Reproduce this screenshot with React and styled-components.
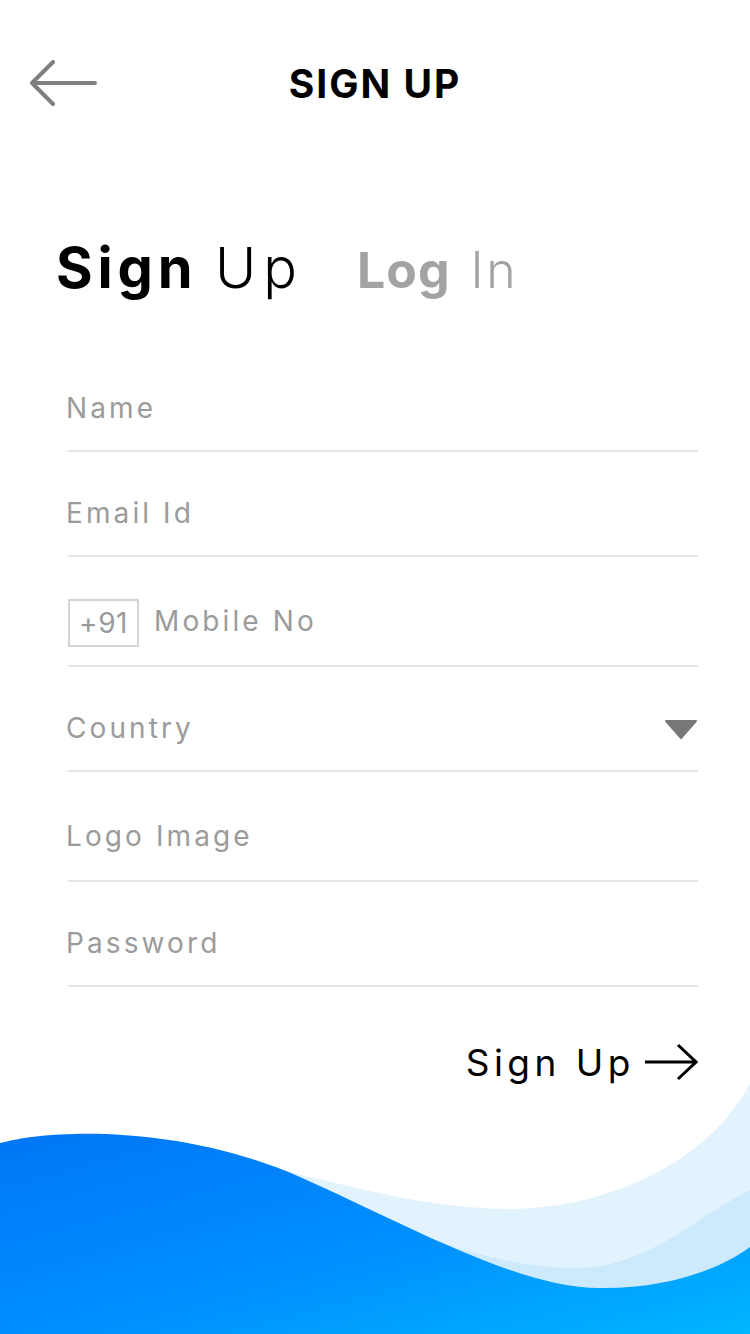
import styled, { createGlobalStyle } from "styled-components";

const GlobalStyle = createGlobalStyle`
  html, body {
    margin: 0;
    padding: 0;
    background: #fff;
  }
  * {
    box-sizing: border-box;
  }
`;

const font = `"Inter", "Liberation Sans", sans-serif`;

const Page = styled.div`
  width: 750px;
  min-height: 1334px;
  display: flex;
  flex-direction: column;
  font-family: ${font};
  background: #fff;
  overflow: hidden;
`;

const Header = styled.header`
  height: 166px;
  display: grid;
  grid-template-columns: 1fr auto 1fr;
  align-items: center;
  padding: 0 29px;
`;

const BackButton = styled.button`
  justify-self: start;
  border: 0;
  background: none;
  padding: 0;
  width: 68px;
  height: 46px;
  cursor: pointer;
  svg {
    display: block;
  }
`;

const Title = styled.h1`
  margin: 0;
  font-size: 39px;
  font-weight: 700;
  letter-spacing: 2px;
  color: #000;
  line-height: 1;
`;

const Tabs = styled.nav`
  margin-top: 74px;
  padding-left: 56px;
  display: flex;
  align-items: baseline;
  gap: 53px;
  line-height: 1;
`;

const Tab = styled.div`
  font-size: ${(p) => (p.$active ? 56 : 50)}px;
  color: ${(p) => (p.$active ? "#000" : "#a3a3a3")};
  white-space: nowrap;
  b {
    font-weight: 700;
    letter-spacing: ${(p) => (p.$active ? 4.8 : 1)}px;
    margin-right: ${(p) => (p.$active ? 2 : 6)}px;
  }
  span {
    font-weight: 300;
    letter-spacing: ${(p) => (p.$active ? 7 : 2.5)}px;
  }
`;

const Form = styled.form`
  margin-top: 51px;
  padding: 0 52px 0 68px;
  display: flex;
  flex-direction: column;
`;

const Field = styled.div`
  height: ${(p) => (p.$tall ? 110 : 105)}px;
  padding-top: 19px;
  display: flex;
  align-items: center;
  gap: 17px;
  border-bottom: 2px solid #e6e6e6;
`;

const Label = styled.span`
  flex: 1;
  font-size: 28px;
  line-height: 28px;
  letter-spacing: 3.1px;
  color: #9b9b9b;
  margin-left: -2px;
`;

const CodeBox = styled.span`
  width: 71px;
  height: 48px;
  margin-top: 4px;
  border: 2px solid #d4d4d4;
  display: flex;
  align-items: center;
  justify-content: center;
  font-size: 28px;
  color: #9b9b9b;
  letter-spacing: 0.5px;
`;

const Caret = styled.svg`
  display: block;
  margin-top: 2px;
`;

const SubmitRow = styled.div`
  display: flex;
  justify-content: flex-end;
  padding: 56px 52px 0 0;
`;

const Submit = styled.button`
  border: 0;
  background: none;
  padding: 0;
  display: flex;
  align-items: center;
  gap: 9px;
  font-family: ${font};
  font-size: 37px;
  letter-spacing: 4.5px;
  color: #000;
  line-height: 1;
  cursor: pointer;
`;

const Wave = styled.svg`
  display: block;
  margin-top: auto;
  width: 750px;
  height: 250px;
`;

const fields = [
  { label: "Name" },
  { label: "Email Id" },
  { label: "Mobile No", code: "+91", tall: true },
  { label: "Country", select: true },
  { label: "Logo Image", tall: true },
  { label: "Password" },
];

export default function App() {
  return (
    <Page>
      <GlobalStyle />
      <Header>
        <BackButton type="button" aria-label="Back">
          <svg width="68" height="46" viewBox="0 0 68 46">
            <path
              d="M66 23 H3 M24 2 L3 23 L24 44"
              fill="none"
              stroke="#7f7f7f"
              strokeWidth="4"
              strokeLinecap="round"
              strokeLinejoin="round"
            />
          </svg>
        </BackButton>
        <Title>SIGN UP</Title>
        <div />
      </Header>

      <Tabs>
        <Tab $active>
          <b>Sign</b> <span>Up</span>
        </Tab>
        <Tab>
          <b>Log</b> <span>In</span>
        </Tab>
      </Tabs>

      <Form onSubmit={(e) => e.preventDefault()}>
        {fields.map((f) => (
          <Field key={f.label} $tall={f.tall}>
            {f.code && <CodeBox>{f.code}</CodeBox>}
            <Label>{f.label}</Label>
            {f.select && (
              <Caret width="34" height="19" viewBox="0 0 34 19">
                <path
                  d="M2 1 H32 L17 18 Z"
                  fill="#777"
                  stroke="#777"
                  strokeWidth="2"
                  strokeLinejoin="round"
                />
              </Caret>
            )}
          </Field>
        ))}
      </Form>

      <SubmitRow>
        <Submit type="button">
          Sign Up
          <svg width="54" height="38" viewBox="0 0 54 38">
            <path
              d="M1 19 H52 M34 2 L52 19 L34 36"
              fill="none"
              stroke="#000"
              strokeWidth="3"
              strokeLinejoin="miter"
            />
          </svg>
        </Submit>
      </SubmitRow>

      <Wave viewBox="0 0 750 250" preserveAspectRatio="none">
        <defs>
          <linearGradient id="blue" x1="0" y1="0" x2="1" y2="1">
            <stop offset="0" stopColor="#0076f6" />
            <stop offset="0.55" stopColor="#0090ff" />
            <stop offset="1" stopColor="#00b6ff" />
          </linearGradient>
        </defs>
        <path
          d="M250 80 C350 100 420 125 510 125 C590 125 700 90 750 0 V250 H250 Z"
          fill="#e3f3fd"
        />
        <path
          d="M420 150 C480 175 540 185 580 184 C650 182 700 130 750 106 V250 H420 Z"
          fill="#cceafb"
        />
        <path
          d="M0 59 C50 45 180 40 300 93 C400 137 520 206 603 204 C670 204 720 185 750 163 V250 H0 Z"
          fill="url(#blue)"
        />
      </Wave>
    </Page>
  );
}
